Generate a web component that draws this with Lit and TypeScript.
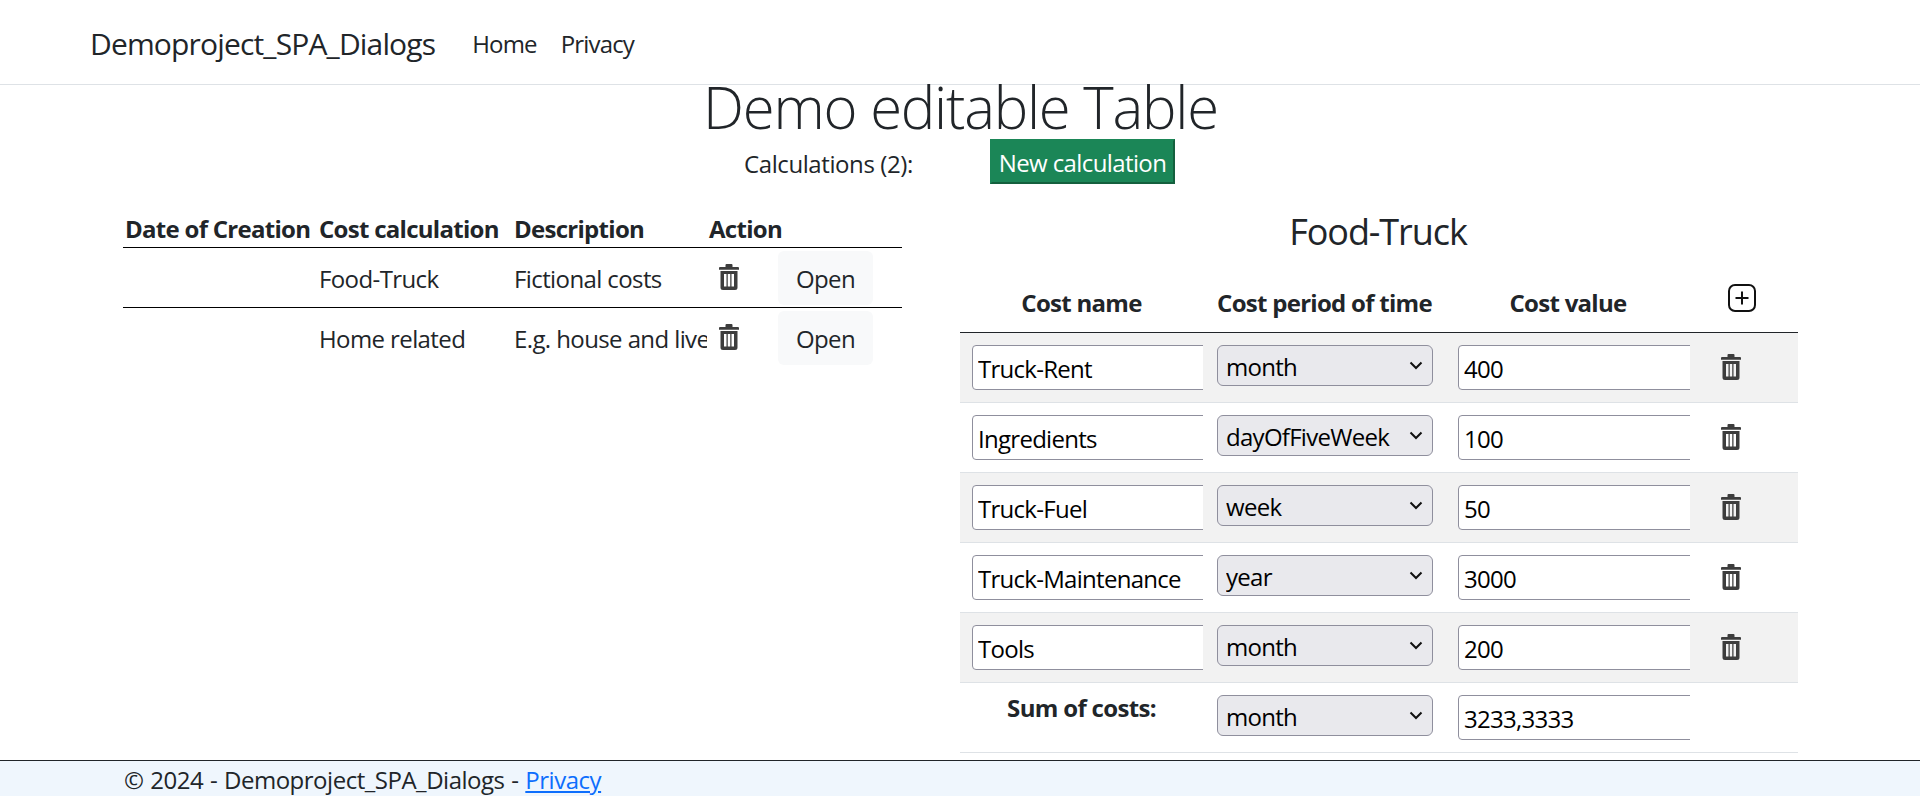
import { LitElement, html, css, svg } from "lit";
import { customElement } from "lit/decorators.js";

const trash = html`<svg class="trash" viewBox="0 0 20 26" aria-hidden="true"><path fill="#3d3d3d" fill-rule="evenodd" d="M7.500 0h5a1 1 0 0 1 1 1v2H19a1 1 0 0 1 1 1V5.800H0V4a1 1 0 0 1 1-1h5.500V1a1 1 0 0 1 1-1zM1.500 7h17v16.500a2.500 2.500 0 0 1-2.500 2.500H4a2.500 2.500 0 0 1-2.500-2.500zM5 10v12.500h2.500V10zm3.750 0v12.500h2.500V10zm3.750 0v12.500H15V10z"/></svg>`;
const plus = svg`<rect x="1" y="1" width="26" height="26" rx="6" fill="none" stroke="#111" stroke-width="2"/><path d="M14 7.500v13M7.500 14h13" stroke="#111" stroke-width="2" fill="none"/>`;

const costs = [
  ["Truck-Rent", "month", "400"],
  ["Ingredients", "dayOfFiveWeek", "100"],
  ["Truck-Fuel", "week", "50"],
  ["Truck-Maintenance", "year", "3000"],
  ["Tools", "month", "200"],
];
const periods = ["month", "dayOfFiveWeek", "week", "year"];

@customElement("app-root")
export class AppRoot extends LitElement {
  static styles = css`
    :host { display: flex; flex-direction: column; height: 796px; overflow: hidden; font-family: "Open Sans", "Segoe UI", sans-serif; font-size: 24px; color: #212529; background: #fff; letter-spacing: -0.03em; }
    * { box-sizing: border-box; }
    header { height: 85px; flex: none; display: flex; align-items: center; padding: 2px 0 0 90px; border-bottom: 1px solid #dee2e6; letter-spacing: -0.035em; }
    .brand { font-size: 30px; margin-right: 37px; }
    nav { display: flex; gap: 24px; }
    main { flex: 1; min-height: 0; padding: 0 122px 0 123px; }
    h1 { margin: 0; font-size: 58px; font-weight: 300; letter-spacing: -0.021em; line-height: 44px; height: 48px; text-align: center; }
    .bar { display: flex; align-items: center; height: 45px; margin-top: 6px; padding-left: 621px; }
    .bar span { width: 246px; letter-spacing: -0.017em; padding-top: 3px; }
    .new { height: 45px; width: 185px; padding: 2px 0 0; font: inherit; letter-spacing: -0.025em; color: #fff; background: #1b8657; border-style: solid; border-width: 2px; border-color: #1b8657 #14603e #14603e #1b8657; }
    .cols { display: grid; grid-template-columns: 779px 838px; gap: 58px; align-items: start; }
    table { border-collapse: collapse; table-layout: fixed; width: 100%; }
    .list { margin-top: 24px; letter-spacing: -0.025em; }
    .list th { height: 39px; font-weight: 700; text-align: left; padding: 2px 0 0 2px; border-bottom: 1px solid #000; white-space: nowrap; letter-spacing: -0.03em; }
    .list td { height: 60px; padding: 2px 0 0 2px; border-bottom: 1px solid #000; white-space: nowrap; overflow: hidden; }
    .list tr:last-child td { border-bottom: 0; }
    .act { display: flex; align-items: center; height: 56px; padding-left: 10px; }
    .act .trash { margin-top: -3px; }
    .open { margin-left: 39px; width: 95px; height: 54px; padding: 0; font: inherit; letter-spacing: inherit; color: #212529; background: #f8f9fa; border: 0; border-radius: 6px; }
    .trash { width: 20px; height: 26px; display: block; }
    h3 { margin: 24px 0 0; padding-right: 2px; font-size: 36px; font-weight: 400; line-height: 48px; text-align: center; letter-spacing: -0.03em; }
    .costs { margin-top: 20px; }
    .costs th { height: 56px; font-weight: 700; text-align: center; border-bottom: 1px solid #212529; padding: 0 0 2px; letter-spacing: -0.03em; }
    .costs td { height: 70px; padding: 0; border-bottom: 1px solid #dee2e6; overflow: hidden; }
    .costs tbody tr:nth-child(odd):not(.sum) td { background: #f2f2f2; }
    .cell { display: block; margin-left: 12px; }
    .inp { display: block; width: 260px; height: 45px; margin-top: 1px; padding: 1px 5px 0; font: inherit; letter-spacing: inherit; color: #000; background: #fff; border: 1px solid #8f8f9d; border-radius: 4px; outline: none; }
    select {
      appearance: none; display: block; width: 216px; height: 41px; margin: 0 0 3px 14px; padding: 2px 8px 0; font: inherit; letter-spacing: inherit; color: #000;
      background: #e9e9ed url("data:image/svg+xml,%3Csvg xmlns='http://www.w3.org/2000/svg' width='14' height='9'%3E%3Cpath d='M1.500 1.500 7 7l5.500-5.500' fill='none' stroke='%23111' stroke-width='2'/%3E%3C/svg%3E") no-repeat right 9px center;
      border: 1px solid #8f8f9d; border-radius: 6px;
    }
    .costs .sum-label { font-weight: 700; text-align: center; padding-bottom: 20px; letter-spacing: -0.028em; }
    .costs .icon-cell { padding-left: 31px; }
    .plus { display: block; width: 28px; height: 28px; margin: 0 0 10px 38px; }
    footer { flex: none; height: 36px; padding-left: 124px; line-height: 38px; background: #eff6fd; border-top: 1px solid #212529; white-space: nowrap; letter-spacing: -0.02em; word-spacing: 1px; }
    footer a { color: #0d6efd; }
  `;

  private sel(v: string) {
    return html`<select>${periods.map((p) => html`<option ?selected=${p === v}>${p}</option>`)}</select>`;
  }

  render() {
    return html`
      <header>
        <span class="brand">Demoproject_SPA_Dialogs</span>
        <nav><span>Home</span><span>Privacy</span></nav>
      </header>
      <main>
        <h1>Demo editable Table</h1>
        <div class="bar"><span>Calculations (2):</span><button class="new">New calculation</button></div>
        <div class="cols">
          <table class="list">
            <colgroup><col style="width:194px" /><col style="width:195px" /><col style="width:195px" /><col /></colgroup>
            <thead><tr><th>Date of Creation</th><th>Cost calculation</th><th>Description</th><th>Action</th></tr></thead>
            <tbody>
              <tr><td></td><td>Food-Truck</td><td>Fictional costs</td><td><div class="act">${trash}<button class="open">Open</button></div></td></tr>
              <tr><td></td><td>Home related</td><td>E.g. house and live</td><td><div class="act">${trash}<button class="open">Open</button></div></td></tr>
            </tbody>
          </table>
          <div>
            <h3>Food-Truck</h3>
            <table class="costs">
              <colgroup><col style="width:243px" /><col style="width:243px" /><col style="width:244px" /><col /></colgroup>
              <thead><tr><th>Cost name</th><th>Cost period of time</th><th>Cost value</th><th><svg class="plus" viewBox="0 0 28 28">${plus}</svg></th></tr></thead>
              <tbody>
                ${costs.map((c) => html`<tr>
                  <td><span class="cell"><input class="inp" .value=${c[0]} /></span></td>
                  <td>${this.sel(c[1])}</td>
                  <td><span class="cell"><input class="inp" .value=${c[2]} /></span></td>
                  <td class="icon-cell">${trash}</td>
                </tr>`)}
                <tr class="sum">
                  <td class="sum-label">Sum of costs:</td>
                  <td>${this.sel("month")}</td>
                  <td><span class="cell"><input class="inp" .value=${"3233,3333"} /></span></td>
                  <td></td>
                </tr>
              </tbody>
            </table>
          </div>
        </div>
      </main>
      <footer>© 2024 - Demoproject_SPA_Dialogs - <a href="#">Privacy</a></footer>
    `;
  }
}
